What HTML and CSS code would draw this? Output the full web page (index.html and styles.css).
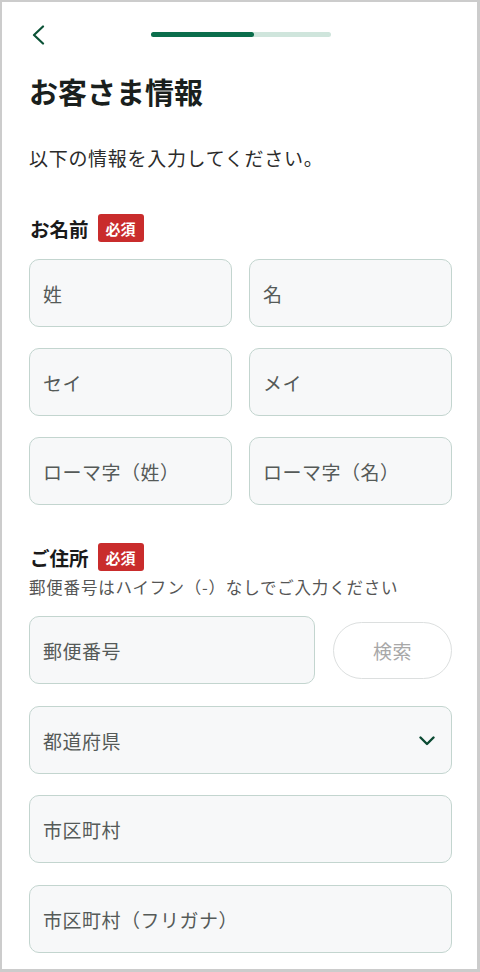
FILE: index.html
```html
<!DOCTYPE html>
<html lang="ja">
<head>
<meta charset="UTF-8">
<meta name="viewport" content="width=device-width, initial-scale=1.0">
<title>お客さま情報</title>
<link rel="stylesheet" href="styles.css">
</head>
<body>
<div class="screen">
    <div class="header">
        <button class="back" aria-label="戻る">
            <svg width="14" height="20" viewBox="0 0 14 20"><path d="M12 1.5 L3 10 L12 18.5" fill="none" stroke="#0b5236" stroke-width="2.2" stroke-linecap="round" stroke-linejoin="round"/></svg>
        </button>
        <div class="progress"><div class="progress-fill" style="width:57%"></div></div>
    </div>

    <h1 class="title">お客さま情報</h1>
    <p class="lead">以下の情報を入力してください。</p>

    <div class="label-row">
        <span class="label">お名前</span>
        <span class="badge">必須</span>
    </div>
    <div class="grid">
        <input class="field" type="text" placeholder="姓">
        <input class="field" type="text" placeholder="名">
        <input class="field" type="text" placeholder="セイ">
        <input class="field" type="text" placeholder="メイ">
        <input class="field" type="text" placeholder="ローマ字（姓）">
        <input class="field" type="text" placeholder="ローマ字（名）">
    </div>

    <div class="label-row address">
        <span class="label">ご住所</span>
        <span class="badge">必須</span>
    </div>
    <p class="hint">郵便番号はハイフン（-）なしでご入力ください</p>
    <div class="postal-row">
        <input class="field postal" type="text" placeholder="郵便番号">
        <button class="search">検索</button>
    </div>
    <div class="field select">
        <span>都道府県</span>
        <svg width="16" height="10" viewBox="0 0 16 10"><path d="M1.5 1.5 L8 8 L14.5 1.5" fill="none" stroke="#0b4a33" stroke-width="2.4" stroke-linecap="round" stroke-linejoin="round"/></svg>
    </div>
    <input class="field wide" type="text" placeholder="市区町村">
    <input class="field wide" type="text" placeholder="市区町村（フリガナ）">
</div>
</body>
</html>
```

FILE: styles.css
```css
* {
    box-sizing: border-box;
}
body {
    margin: 0;
    font-family: "Noto Sans CJK JP", "Noto Sans", sans-serif;
    color: #1a1a1a;
    background: #fff;
}
.screen {
    width: 480px;
    height: 972px;
    overflow: hidden;
    border: solid #cccccc;
    border-width: 2px 3px 3px 2px;
    padding: 0 25px 0 27px;
}
.header {
    height: 66px;
    display: flex;
    align-items: center;
}
.back {
    background: none;
    border: none;
    padding: 0;
    margin-left: 2px;
    display: flex;
    cursor: pointer;
}
.progress {
    width: 180px;
    height: 5px;
    margin-left: 106px;
    margin-top: -2px;
    border-radius: 3px;
    background: #cfe5dc;
}
.progress-fill {
    height: 100%;
    border-radius: 3px;
    background: #0b6e4c;
}
.title {
    margin: 3px 0 0;
    font-size: 29px;
    line-height: 40px;
    font-weight: 700;
    color: #1a1f1d;
}
.lead {
    margin: 33px 0 0;
    font-size: 19px;
    line-height: 28px;
    letter-spacing: 0.7px;
    color: #2b2b2b;
}
.label-row {
    margin-top: 42px;
    height: 28px;
    display: flex;
    align-items: center;
    gap: 9px;
}
.label-row.address {
    margin-top: 38px;
}
.label {
    font-size: 19.5px;
    font-weight: 700;
    color: #1a1a1a;
    margin-left: 1px;
}
.badge {
    width: 46px;
    height: 28px;
    border-radius: 3px;
    background: #c92c2c;
    color: #fff;
    font-size: 15px;
    font-weight: 700;
    display: flex;
    align-items: center;
    justify-content: center;
}
.grid {
    margin-top: 17px;
    display: grid;
    grid-template-columns: 203px 203px;
    column-gap: 17px;
    row-gap: 21px;
}
.field {
    display: block;
    height: 68px;
    border: 1px solid #c3d5cf;
    border-radius: 10px;
    background: #f7f8f9;
    padding: 0 13px;
    font-family: inherit;
    font-size: 19px;
    letter-spacing: 0.5px;
    color: #333;
    outline: none;
}
.field::placeholder {
    color: #555a58;
}
.hint {
    margin: 4px 0 0;
    font-size: 16.5px;
    line-height: 24px;
    letter-spacing: 0.8px;
    color: #555;
}
.postal-row {
    margin-top: 17px;
    display: flex;
    align-items: center;
    gap: 18px;
}
.postal {
    width: 286px;
}
.search {
    width: 119px;
    height: 57px;
    border: 1.5px solid #dcdfdf;
    border-radius: 29px;
    background: #fff;
    font-family: inherit;
    font-size: 19px;
    letter-spacing: 0.5px;
    color: #a8a8a8;
    cursor: pointer;
}
.select {
    margin-top: 22px;
    width: 423px;
    display: flex;
    align-items: center;
    justify-content: space-between;
    padding-right: 16px;
    color: #555a58;
}
.select svg {
    margin-top: 2px;
}
.wide {
    width: 423px;
    margin-top: 21px;
}
.wide:last-child {
    margin-top: 22px;
}
```
